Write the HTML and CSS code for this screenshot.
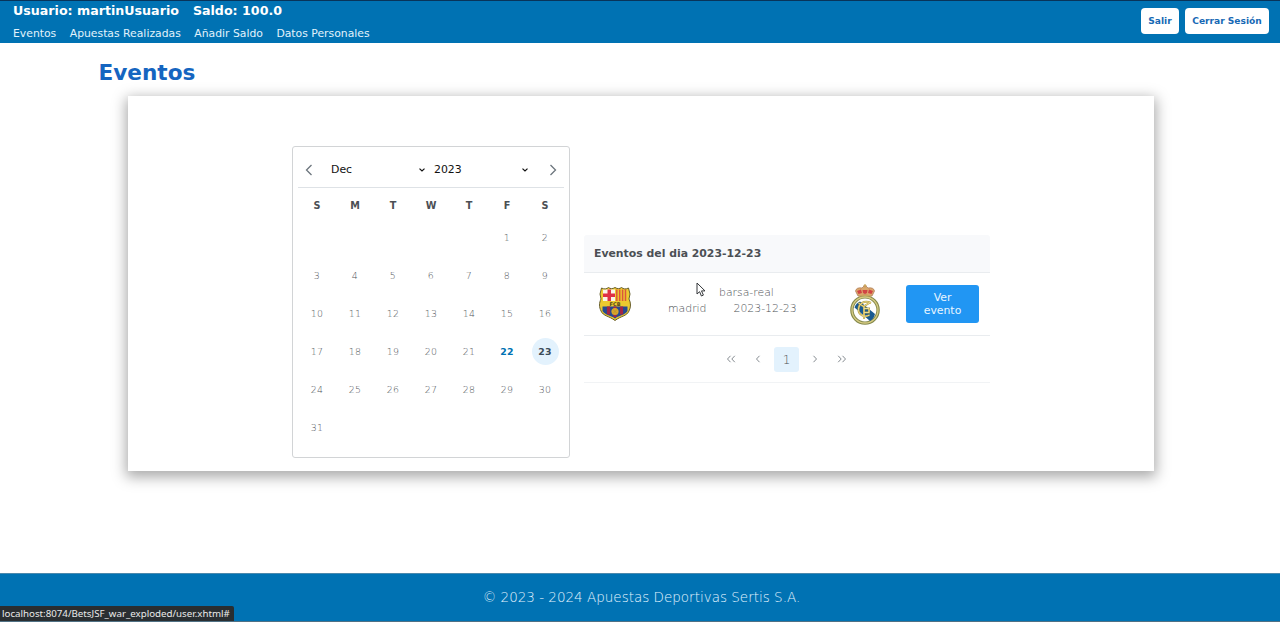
FILE: index.html
```html
<!DOCTYPE html>
<html lang="es">
<head>
<meta charset="utf-8">
<title>Eventos</title>
<link rel="stylesheet" href="styles.css">
</head>
<body>
<header class="topbar">
  <div class="account">
    <div class="user"><span class="user-name">Usuario: martinUsuario</span><span class="user-balance">Saldo: 100.0</span></div>
    <nav class="nav"><a>Eventos</a><a>Apuestas Realizadas</a><a>Añadir Saldo</a><a>Datos Personales</a></nav>
  </div>
  <div class="actions"><button class="exit">Salir</button><button class="logout">Cerrar Sesión</button></div>
</header>
<main class="main">
  <h1 class="title">Eventos</h1>
  <section class="panel">
    <div class="calendar">
      <div class="cal-head">
        <svg class="arrow" viewBox="0 0 8 12"><path d="M6.5 1 1.5 6l5 5"/></svg>
        <div class="select">Dec<svg viewBox="0 0 6 4"><path d="m.5.6 2.500 2.400L5.500.6"/></svg></div>
        <div class="select">2023<svg viewBox="0 0 6 4"><path d="m.5.6 2.500 2.400L5.500.6"/></svg></div>
        <svg class="arrow next" viewBox="0 0 8 12"><path d="m1.500 1 5 5-5 5"/></svg>
      </div>
      <div class="weekdays"><span>S</span><span>M</span><span>T</span><span>W</span><span>T</span><span>F</span><span>S</span></div>
      <div class="days">
        <span class="first">1</span><span>2</span>
        <span>3</span><span>4</span><span>5</span><span>6</span><span>7</span><span>8</span><span>9</span>
        <span>10</span><span>11</span><span>12</span><span>13</span><span>14</span><span>15</span><span>16</span>
        <span>17</span><span>18</span><span>19</span><span>20</span><span>21</span><span class="today">22</span><span class="selected"><b>23</b></span>
        <span>24</span><span>25</span><span>26</span><span>27</span><span>28</span><span>29</span><span>30</span>
        <span>31</span>
      </div>
    </div>
    <div class="table">
      <div class="table-head"><span>Eventos del dia 2023-12-23</span></div>
      <div class="event">
        <svg class="barsa" viewBox="0 0 34 36">
          <defs><clipPath id="shield"><path d="M3.500 2c3 1.500 5 1 7-.5 2 1.500 4 1.500 6.500 0 2.500 1.500 4.500 1.500 6.500 0 2 1.500 4 2 7 .5L32 8l-1 5c2 4 2 8 0 12-2 5-8 5-14 9.500C11 30 5 30 3 25c-2-4-2-8 0-12L2 8z"/></clipPath></defs>
          <g clip-path="url(#shield)">
            <path fill="#edc92f" d="M0 0h34v36H0z"/>
            <path fill="#faf5e8" d="M5 3.500h12V15H5z"/>
            <path fill="#df3045" d="M9.500 3.500h3.500V15H9.500zM5 7.500h12v3.500H5z"/>
            <path stroke="#dc553c" stroke-width="1.500" d="M18.800 3.500V15M21.700 3.500V15M24.600 3.500V15M27.500 3.500V15"/>
            <path fill="#244b91" d="M4.500 20.500h25V25c-2 4-8 4-12.500 7.500C12.500 29 6.500 29 4.500 25z"/>
            <path stroke="#a32646" stroke-width="3.200" d="M10.500 20.500v8M17 20.500V31M23.500 20.500v8"/>
          </g>
          <text x="17" y="19.600" text-anchor="middle">FCB</text>
          <circle cx="17" cy="25.500" r="3.600" fill="#d9a82a"/><path d="m15 23.500 4 4m0-4-4 4" stroke="#b88b2d" stroke-width=".7"/>
          <path fill="none" stroke="#5a5120" stroke-width=".9" d="M3.500 2c3 1.500 5 1 7-.5 2 1.500 4 1.500 6.500 0 2.500 1.500 4.500 1.500 6.500 0 2 1.500 4 2 7 .5L32 8l-1 5c2 4 2 8 0 12-2 5-8 5-14 9.500C11 30 5 30 3 25c-2-4-2-8 0-12L2 8z"/>
        </svg>
        <div class="event-text"><span class="match">barsa-real</span><br>madrid<span class="date">2023-12-23</span></div>
        <svg class="madrid" viewBox="0 0 30 41">
          <circle cx="15" cy="26" r="13.100" fill="#fff" stroke="#85894c" stroke-width="3.400"/>
          <circle cx="15" cy="26" r="13" fill="none" stroke="#d6cb82" stroke-width="1.300"/>
          <path fill="#195a91" d="M10 17.500Q6 19 4.500 23.500l15.500 13.500q4-2 5-7z"/>
          <path fill="none" stroke="#b59b3d" stroke-width="2" d="M21 19c-7-3.500-12.500 1-12.500 6.500s6 8.500 11 5.500M8.500 19l5 3.500 6.500-4M14 22.500V35M14 24.500h5v4h-5"/>
          <path fill="none" stroke="#eadc92" stroke-width="1" d="M21 19c-7-3.500-12.500 1-12.500 6.500s6 8.500 11 5.500M8.500 19l5 3.500 6.500-4M14 22.500V35M14 24.500h5v4h-5"/>
          <path fill="#dba76c" stroke="#a87552" stroke-width=".7" d="m8 12-2.500-5q1-4 6.500-3l2-2h2l2 2q5.500-1 6.500 3L22 12q-7-2-14 0z"/>
          <path fill="#d14444" d="m7 7 4-1.500 1 3.500-3.500 1zm5.500-1h5L17 9l-2 1-2-1zm6.500-.5L23 7l-1.500 3-3.500-1z"/>
          <path stroke="#cba65e" stroke-width="1.200" d="M15 0v4m-1.500-2.500h3M9 12.200q6-1.500 12 0" fill="none"/>
        </svg>
        <button class="view">Ver<br>evento</button>
      </div>
      <div class="pager">
        <svg viewBox="0 0 10 8"><path d="M4.500.8 1.500 4l3 3.200M8.800.8 5.800 4l3 3.200"/></svg>
        <svg viewBox="0 0 10 8"><path d="M6.500.8 3.500 4l3 3.200"/></svg>
        <span class="page">1</span>
        <svg viewBox="0 0 10 8"><path d="m3.500.8 3 3.200-3 3.200"/></svg>
        <svg viewBox="0 0 10 8"><path d="m1.200.8 3 3.200-3 3.200M5.500.8l3 3.200-3 3.200"/></svg>
      </div>
    </div>
  </section>
</main>
<footer class="footer"><span>© 2023 - 2024 Apuestas Deportivas Sertis S.A.</span></footer>
<div class="status">localhost:8074/BetsJSF_war_exploded/user.xhtml#</div>
<svg class="cursor" viewBox="0 0 10 15"><path d="M1 1v11l2.600-2.300L5.400 14l2-.9-1.900-4.200H9z"/></svg>
</body>
</html>
```
FILE: styles.css
```css
* { box-sizing: border-box; }
body { margin: 0; height: 622px; display: flex; flex-direction: column; overflow: hidden; background: #fff; font-family: "DejaVu Sans", sans-serif; color: #4b4f54; }
button { font-family: inherit; border: 0; padding: 0; }
svg { display: block; flex: none; }
.topbar { height: 43px; flex: none; display: flex; justify-content: space-between; background: #0072b3; border-top: 1px solid #08345a; color: #fff; padding: 0 11px 0 13px; }
.user { height: 20px; line-height: 19px; font-size: 12.650px; font-weight: 700; white-space: nowrap; }
.user-balance { margin-left: 14px; }
.nav { display: flex; gap: 13.500px; font-size: 10.820px; line-height: 25px; color: #e2f2fc; white-space: nowrap; }
.actions { display: flex; gap: 6px; padding-top: 7px; }
.actions button { height: 26px; border-radius: 4px; background: #fff; color: #1769b5; font-size: 9.100px; font-weight: 700; padding-bottom: 1px; }
.exit { width: 38px; }
.logout { width: 84px; }
.main { flex: 1; }
.title { margin: 0 0 0 98.500px; height: 53px; line-height: 59px; font-size: 21.600px; font-weight: 700; color: #1565c0; }
.panel { width: 1026px; height: 375px; margin-left: 128px; padding: 50px 0 0 164px; display: flex; gap: 14px; background: #fff; box-shadow: 0 4px 13px 2px rgba(0,0,0,.34); }
.calendar { width: 278px; height: 312px; border: 1px solid #d2d4d6; border-radius: 3px; padding: 5px; }
.cal-head { height: 36px; display: flex; align-items: center; padding: 0 7px; border-bottom: 1px solid #dee2e6; font-size: 10.900px; color: #111; }
.arrow { width: 8px; height: 12px; }
.arrow path { fill: none; stroke: #6c757d; stroke-width: 1.300; }
.select { width: 94px; display: flex; align-items: center; justify-content: space-between; margin-left: 18px; }
.select + .select { margin-left: 9px; }
.select svg { width: 6px; height: 4px; }
.select path { fill: none; stroke: #111; stroke-width: 1.200; }
.arrow.next { margin-left: auto; }
.weekdays, .days { display: grid; grid-template-columns: repeat(7, 38px); text-align: center; }
.weekdays { height: 31px; line-height: 36px; font-size: 9.700px; font-weight: 700; }
.days { grid-auto-rows: 38px; line-height: 37px; font-size: 9.400px; letter-spacing: .3px; font-weight: 200; color: #50555a; }
.first { grid-column: 6; }
.today { color: #0072b3; font-weight: 700; }
.selected { display: flex; align-items: center; justify-content: center; }
.selected b { width: 27px; height: 27px; line-height: 27px; margin-top: -1px; border-radius: 50%; background: #e3f2fd; color: #3c4c59; font-weight: 700; }
.table { width: 406px; margin-top: 89px; }
.table-head { height: 38px; line-height: 37px; padding-left: 10px; background: #f8f9fb; border-bottom: 1px solid #e9ecef; border-radius: 3px 3px 0 0; font-size: 10.860px; font-weight: 700; }
.event { height: 63px; display: flex; align-items: center; padding: 0 11px 0 14px; border-bottom: 1px solid #e9ecef; }
.barsa { width: 34px; height: 36px; margin-top: -1px; }
.barsa text { font-size: 5px; font-weight: 700; fill: #51451c; }
.event-text { margin: -7px 0 0 36px; width: 145px; font-size: 10.860px; line-height: 16px; font-weight: 200; white-space: nowrap; }
.match { margin-left: 51px; }
.date { margin-left: 27px; }
.madrid { width: 30px; height: 41px; margin-left: 37px; }
.view { width: 73px; height: 38px; margin-left: auto; border-radius: 3px; background: #2196f3; color: #e8f5ff; font-size: 10.860px; line-height: 13px; }
.pager { height: 47px; display: flex; align-items: center; justify-content: center; padding-right: 1px; border-bottom: 1px solid #f1f3f5; font-size: 12px; font-weight: 200; }
.pager svg { width: 10px; height: 8px; margin: 0 8.800px; }
.pager path { fill: none; stroke: #858b90; stroke-width: 1; }
.page { width: 25px; height: 25px; line-height: 26px; margin: 0 2px; text-align: center; border-radius: 3px; background: #e3f2fd; }
.footer { height: 49px; flex: none; display: flex; justify-content: center; background: #0072b3; border-top: 1px solid #4b89ad; border-bottom: 1px solid #507185; color: #e4f4ff; font-size: 13.500px; line-height: 47px; font-weight: 200; padding-left: 3px; }
.status { position: absolute; left: 0; top: 606px; width: 234px; height: 15px; padding-left: 2px; line-height: 15px; background: #292e31; border-radius: 0 2px 0 0; color: #e9eaea; font-family: "Noto Sans", sans-serif; font-size: 9.720px; white-space: nowrap; }
.cursor { position: absolute; left: 696px; top: 282px; width: 10px; height: 15px; }
.cursor path { fill: #fff; stroke: #34373a; stroke-width: 1; }
```
